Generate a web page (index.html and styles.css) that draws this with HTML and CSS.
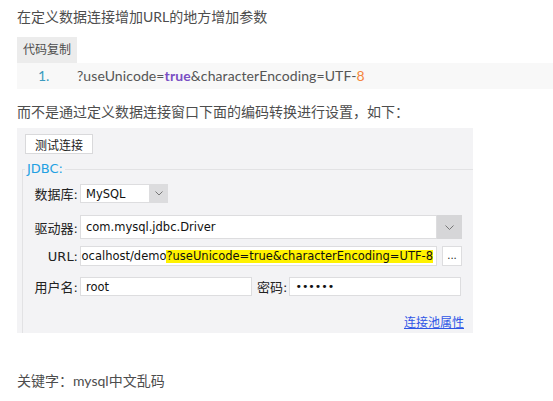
FILE: index.html
```html
<!DOCTYPE html>
<html lang="zh-CN">
<head>
  <meta charset="UTF-8">
  <meta name="viewport" content="width=device-width, initial-scale=1.0">
  <title>mysql中文乱码</title>
  <link rel="stylesheet" href="styles.css">
</head>
<body>
  <div class="article">
    <p class="intro">在定义数据连接增加URL的地方增加参数</p>
    <div class="code-box">
      <div class="code-tools"><span class="copy-btn">代码复制</span></div>
      <ol class="code-lines">
        <li><span class="num">1.</span><span class="code">?useUnicode=<b class="kw">true</b>&amp;characterEncoding=UTF-<span class="lit">8</span></span></li>
      </ol>
    </div>
    <p class="desc">而不是通过定义数据连接窗口下面的编码转换进行设置，如下：</p>
    <div class="dialog">
      <button class="test-btn">测试连接</button>
      <fieldset class="jdbc">
        <legend>JDBC:</legend>
        <div class="row row-db">
          <span class="lbl">数据库:</span>
          <div class="field db-field">MySQL</div>
          <span class="arrow small-arrow"><svg width="8" height="5" viewBox="0 0 8 5"><polyline points="0.5,0.5 4,4 7.5,0.5" fill="none" stroke="#777" stroke-width="1"/></svg></span>
        </div>
        <div class="row row-driver">
          <span class="lbl">驱动器:</span>
          <div class="field grow">com.mysql.jdbc.Driver</div>
          <span class="arrow big-arrow"><svg width="9" height="5" viewBox="0 0 9 5"><polyline points="0.5,0.5 4.5,4.5 8.5,0.5" fill="none" stroke="#777" stroke-width="1"/></svg></span>
        </div>
        <div class="row row-url">
          <span class="lbl">URL:</span>
          <div class="field grow url-field"><span class="url-text">ocalhost/demo<span class="hl">?useUnicode=true&amp;characterEncoding=UTF-8</span></span></div>
          <button class="more-btn">...</button>
        </div>
        <div class="row row-user">
          <span class="lbl">用户名:</span>
          <div class="field user-field">root</div>
          <span class="lbl-pwd">密码:</span>
          <div class="field grow pwd-field">••••••</div>
        </div>
        <div class="pool-row"><a href="#" class="pool-link">连接池属性</a></div>
      </fieldset>
    </div>
    <p class="keywords">关键字：mysql中文乱码</p>
  </div>
</body>
</html>
```

FILE: styles.css
```css
body {
  margin: 0;
  background: #fff;
  font-family: Lato, "Noto Sans CJK SC", sans-serif;
  font-size: 14px;
  color: #4d4d4d;
}
.article {
  padding: 7px 0 0 17px;
}
.intro,
.desc,
.keywords {
  margin: 0;
  line-height: 20px;
}
.code-box {
  margin-top: 10px;
}
.copy-btn {
  display: inline-block;
  height: 26px;
  line-height: 26px;
  padding: 0 6px;
  background: #ececec;
  font-size: 12px;
  vertical-align: top;
}
.code-lines {
  list-style: none;
  margin: 0;
  padding: 0;
  background: #f8f8f8;
}
.code-lines li {
  display: flex;
  height: 26px;
  line-height: 26px;
  white-space: nowrap;
}
.num {
  width: 39px;
  padding-left: 21px;
  color: #3b9bbf;
}
.code {
  color: #555;
  letter-spacing: 0.1px;
}
.kw {
  color: #7a4fc4;
  font-weight: 700;
}
.lit {
  color: #f5853c;
}
.desc {
  margin-top: 13px;
}
.dialog {
  width: 456px;
  margin-top: 6px;
  padding: 6px 0 0;
  background: #f3f3f5;
  color: #222;
}
.test-btn {
  display: block;
  width: 68px;
  height: 20px;
  margin-left: 8px;
  padding: 0;
  background: #fff;
  border: 1px solid #d9d9db;
  font-family: "Noto Sans CJK SC", sans-serif;
  font-size: 12px;
  color: #222;
}
.jdbc {
  margin: 7px 0 0 5px;
  padding: 7px 11px 4px 0;
  min-width: 0;
  border: none;
  border-top: 1px solid #e2e2e4;
  border-left: 1px solid #e2e2e4;
}
.jdbc legend {
  margin-left: 2px;
  padding: 0 2px;
  font-family: "DejaVu Sans", sans-serif;
  font-size: 13px;
  line-height: 16px;
  color: #22a0e2;
}
.row {
  display: flex;
  align-items: center;
}
.lbl {
  width: 55px;
  margin-right: 2px;
  flex-shrink: 0;
  text-align: right;
  font-family: "DejaVu Sans", "Noto Sans CJK SC", sans-serif;
  font-size: 13px;
}
.field {
  display: flex;
  align-items: center;
  box-sizing: border-box;
  padding-left: 5px;
  background: #fff;
  border: 1px solid #dddddf;
  font-family: "DejaVu Sans", sans-serif;
  font-size: 11.5px;
  color: #111;
  white-space: nowrap;
}
.grow {
  flex: 1;
  min-width: 0;
}
.arrow {
  display: flex;
  align-items: center;
  justify-content: center;
  align-self: stretch;
}
.row-db .db-field {
  width: 70px;
  height: 19px;
}
.small-arrow {
  width: 18px;
  background: #dcdcde;
}
.row-driver {
  margin-top: 12px;
}
.row-driver .field {
  height: 24px;
}
.big-arrow {
  width: 25px;
  background: #d6d6d8;
}
.row-url {
  margin-top: 7px;
}
.url-field {
  height: 20px;
  overflow: hidden;
  justify-content: flex-end;
  padding: 0 3px 0 2px;
}
.url-text {
  flex-shrink: 0;
}
.hl {
  display: inline-block;
  background: #fff200;
  line-height: 13px;
}
.more-btn {
  width: 20px;
  height: 20px;
  margin-left: 5px;
  padding: 0;
  background: #fff;
  border: 1px solid #dddddf;
  font-family: "DejaVu Sans", sans-serif;
  font-size: 10px;
  line-height: 18px;
  color: #222;
}
.row-user {
  margin-top: 11px;
}
.row-user .field {
  height: 19px;
}
.user-field {
  width: 172px;
}
.lbl-pwd {
  margin: 0 2px 0 5px;
  font-family: "DejaVu Sans", "Noto Sans CJK SC", sans-serif;
  font-size: 13px;
}
.pwd-field {
  font-size: 11px;
  margin-right: 1px;
}
.pool-row {
  margin: 19px -2px 0 0;
  text-align: right;
  line-height: 14px;
}
.pool-link {
  font-family: "Noto Sans CJK SC", sans-serif;
  font-size: 12px;
  color: #2f55e6;
  text-decoration: underline;
}
.keywords {
  margin-top: 38px;
}
```
